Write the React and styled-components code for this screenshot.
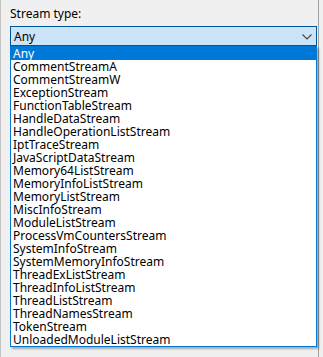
import styled, { createGlobalStyle } from "styled-components";

const Global = createGlobalStyle`
  html, body {
    margin: 0;
    padding: 0;
    background: #f0f0f0;
    font-family: "Segoe UI", "Noto Sans", "Liberation Sans", sans-serif;
  }
`;

const Panel = styled.div`
  width: 319px;
  height: 357px;
  box-sizing: border-box;
  border-left: 1px solid #c4c4c4;
  border-right: 1px solid #a0a0a0;
  padding: 6px 0 0 9px;
`;

const Label = styled.div`
  font-size: 12px;
  color: #000;
  line-height: 16px;
  height: 16px;
  margin-bottom: 4px;
`;

const Combo = styled.div`
  width: 307px;
  height: 20px;
  box-sizing: border-box;
  border: 1px solid #005499;
  background: #cce4f7;
  display: flex;
  align-items: center;
  justify-content: space-between;
  padding: 1px 4px 0 3px;
  font-size: 12px;
`;

const List = styled.ul`
  list-style: none;
  margin: 0;
  padding: 0;
  width: 307px;
  box-sizing: border-box;
  border: 1px solid #0078d7;
  border-top: none;
  background: #fff;
  box-shadow: 2px 2px 2px rgba(0, 0, 0, 0.3);
`;

const Item = styled.li`
  font-size: 12px;
  line-height: 13px;
  height: 13px;
  padding-left: 2px;
  white-space: nowrap;
  color: ${(p) => (p.$active ? "#fff" : "#000")};
  background: ${(p) => (p.$active ? "#0078d7" : "transparent")};
  ${(p) => p.$active && "height: 14px; line-height: 15px;"}
`;

const streams = [
  "Any",
  "CommentStreamA",
  "CommentStreamW",
  "ExceptionStream",
  "FunctionTableStream",
  "HandleDataStream",
  "HandleOperationListStream",
  "IptTraceStream",
  "JavaScriptDataStream",
  "Memory64ListStream",
  "MemoryInfoListStream",
  "MemoryListStream",
  "MiscInfoStream",
  "ModuleListStream",
  "ProcessVmCountersStream",
  "SystemInfoStream",
  "SystemMemoryInfoStream",
  "ThreadExListStream",
  "ThreadInfoListStream",
  "ThreadListStream",
  "ThreadNamesStream",
  "TokenStream",
  "UnloadedModuleListStream",
];

export default function App() {
  return (
    <Panel>
      <Global />
      <Label>Stream type:</Label>
      <Combo>
        <span>Any</span>
        <svg width="10" height="6" viewBox="0 0 10 6">
          <path d="M0.5 0.5 L5 5 L9.5 0.5" fill="none" stroke="#444" strokeWidth="1.1" />
        </svg>
      </Combo>
      <List>
        {streams.map((s, i) => (
          <Item key={s} $active={i === 0}>
            {s}
          </Item>
        ))}
      </List>
    </Panel>
  );
}
